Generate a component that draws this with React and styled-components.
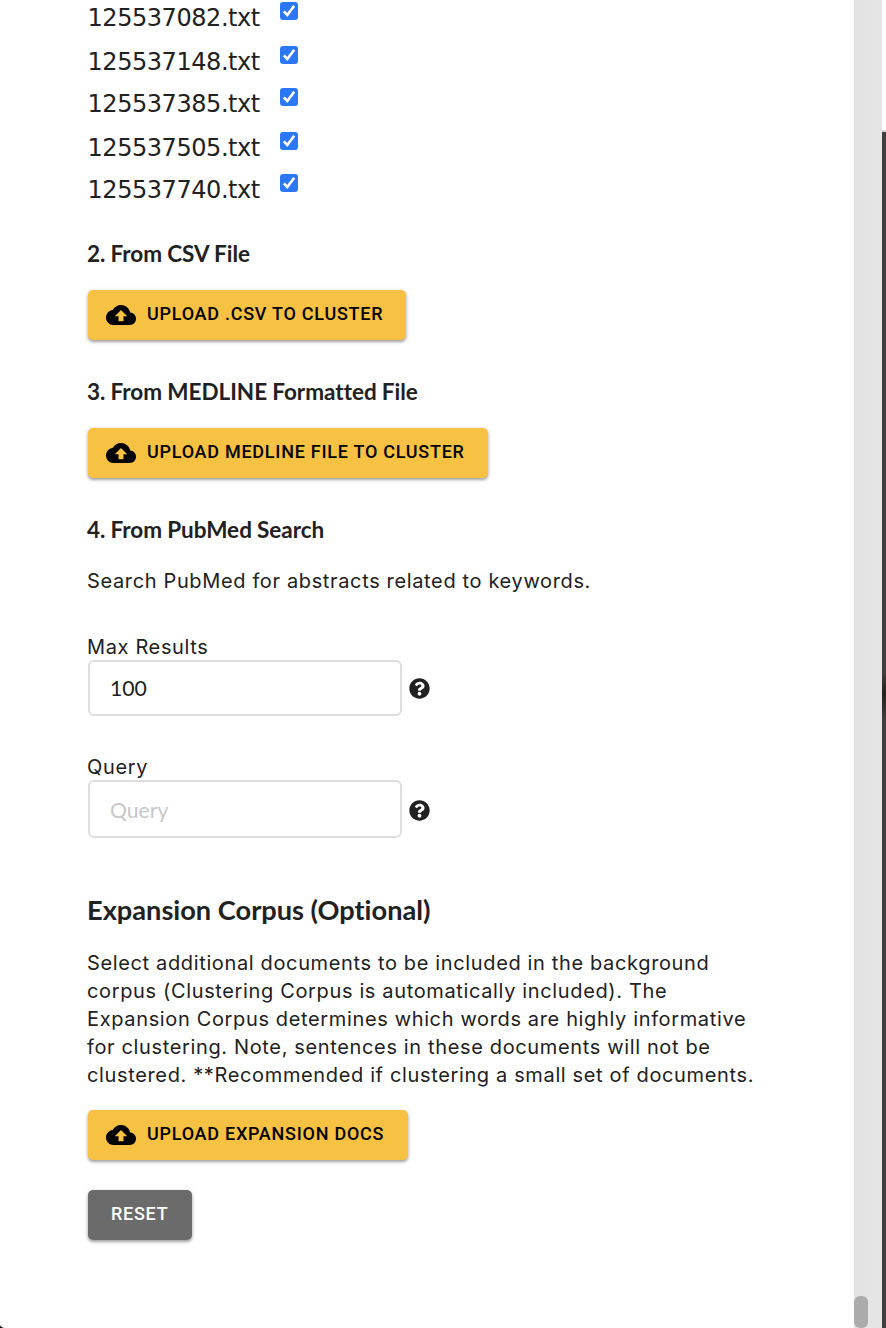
import React, { useState } from "react";
import styled, { createGlobalStyle } from "styled-components";
import { FaQuestionCircle } from "react-icons/fa";

const GlobalStyle = createGlobalStyle`
  *, *::before, *::after { box-sizing: border-box; }
  body { margin: 0; background: #fff; color: #212121; overflow: hidden; }
`;

const Page = styled.div`
  display: flex;
  height: 1328px;
  overflow: hidden;
`;

const Content = styled.main`
  flex: 1;
  padding-left: 87px;
  font-family: Inter, "Liberation Sans", sans-serif;
`;

const FileList = styled.ul`
  list-style: none;
  margin: 0;
  padding: 0;
`;

const FileRow = styled.li`
  display: flex;
  align-items: flex-start;
  height: ${(p) => p.$height}px;
`;

const FileName = styled.label`
  width: 193px;
  padding: 4px 0 0 0.5px;
  font: 24px/28px "DejaVu Sans", sans-serif;
  letter-spacing: -0.45px;
`;

const CheckBox = styled.button`
  display: flex;
  width: 18px;
  height: 18px;
  margin: 2px 0 0;
  padding: 0;
  border: 0;
  border-radius: 3px;
  background: ${(p) => (p.$checked ? "#2b77f8" : "#ddd")};
`;

const SectionTitle = styled.h4`
  margin: 0;
  padding-top: ${(p) => p.$top}px;
  font: 700 22.5px/30px Lato, sans-serif;
  font-variant-ligatures: none;
  word-spacing: -0.4px;
`;

const CorpusTitle = styled.h3`
  margin: 0;
  padding-top: 54px;
  font: 700 27.2px/36px Lato, sans-serif;
  font-variant-ligatures: none;
`;

const Description = styled.p`
  margin: 0;
  padding-top: ${(p) => p.$top}px;
  font-size: 20px;
  line-height: 28px;
  letter-spacing: 0.64px;
  white-space: pre-line;
`;

const Button = styled.button`
  display: flex;
  align-items: center;
  width: ${(p) => p.$width}px;
  height: 50px;
  margin: ${(p) => p.$top}px 0 0 1px;
  padding: 0 0 0 ${(p) => (p.$muted ? 23 : 18)}px;
  border: 0;
  border-radius: 5px;
  background: ${(p) => (p.$muted ? "#6b6b6b" : "#f7c143")};
  color: ${(p) => (p.$muted ? "#fff" : "#000")};
  box-shadow: 0 2px 3px rgba(0, 0, 0, 0.3), 0 1px 5px rgba(0, 0, 0, 0.14);
  font: 500 18px/24px Roboto, sans-serif;
  letter-spacing: 0.74px;
  white-space: nowrap;
`;

const ButtonLabel = styled.span`
  padding-bottom: 2px;
`;

const UploadIcon = styled.svg`
  width: 30px;
  height: 30px;
  margin-right: 11px;
  fill: currentColor;
`;

const Field = styled.div`
  padding-top: ${(p) => p.$top}px;
`;

const FieldLabel = styled.label`
  display: block;
  height: 27px;
  font-size: 20px;
  line-height: 28px;
  letter-spacing: 0.64px;
`;

const FieldRow = styled.div`
  display: flex;
  align-items: center;
  padding-left: 1px;
`;

const Input = styled.input`
  width: 314px;
  height: ${(p) => p.$height}px;
  padding: ${(p) => p.$offset || 0}px 20px ${(p) => p.$bottom || 0}px;
  border: 2px solid #dededf;
  border-radius: 6px;
  background: #fff;
  color: #212121;
  font: 21.2px Lato, sans-serif;
  outline: none;
  &::placeholder { color: #c7c7c7; opacity: 1; }
`;

const HelpIcon = styled(FaQuestionCircle)`
  width: 21px;
  height: 21px;
  margin: ${(p) => p.$shift || 0}px 0 0 6.6px;
`;

const ScrollTrack = styled.div`
  display: flex;
  align-items: flex-end;
  width: 28px;
  background: linear-gradient(90deg, #e3e3e3 0 14px, #e5e5e5 14px);
`;

const ScrollThumb = styled.div`
  width: 14px;
  height: 32px;
  border-radius: 6px;
  background: #ababab;
`;

const WindowEdge = styled.div`
  width: 4px;
  padding-top: 130px;
`;

const EdgeShade = styled.div`
  height: 1198px;
  border-top: 2px solid #d6d6d6;
  background: linear-gradient(#40403e 0 540px, #25221a 562px, #40403e 590px);
`;

const WindowCorner = styled.svg`
  position: absolute;
  left: 0;
  top: 1325px;
  width: 5px;
  height: 3px;
`;

const files = [
  { name: "125537082.txt", height: 44 },
  { name: "125537148.txt", height: 42 },
  { name: "125537385.txt", height: 44 },
  { name: "125537505.txt", height: 42 },
  { name: "125537740.txt", height: 44 },
];

function FileItem({ file }) {
  const [checked, setChecked] = useState(true);
  return (
    <FileRow $height={file.height}>
      <FileName>{file.name}</FileName>
      <CheckBox
        role="checkbox"
        aria-checked={checked}
        aria-label={file.name}
        $checked={checked}
        onClick={() => setChecked(!checked)}
      >
        {checked && (
          <svg width="18" height="18" viewBox="0 0 18 18" fill="none">
            <path d="M3.8 9.4L7.3 13L14.2 3.7" stroke="#fff" strokeWidth="2.6" />
          </svg>
        )}
      </CheckBox>
    </FileRow>
  );
}

function UploadButton({ width, top, children }) {
  return (
    <Button $width={width} $top={top}>
      <UploadIcon viewBox="0 0 24 24">
        <path d="M19.35 10.04C18.67 6.59 15.64 4 12 4 9.11 4 6.6 5.64 5.35 8.04 2.34 8.36 0 10.91 0 14c0 3.31 2.69 6 6 6h13c2.76 0 5-2.24 5-5 0-2.64-2.05-4.78-4.65-4.96zM14 13v4h-4v-4H7l5-5 5 5h-3z" />
      </UploadIcon>
      <ButtonLabel>{children}</ButtonLabel>
    </Button>
  );
}

export default function App() {
  const [max, setMax] = useState("100");
  const [query, setQuery] = useState("");
  return (
    <Page>
      <GlobalStyle />
      <Content>
        <FileList>
          {files.map((file) => (
            <FileItem key={file.name} file={file} />
          ))}
        </FileList>
        <SectionTitle $top={23}>2. From CSV File</SectionTitle>
        <UploadButton width={318} top={21}>UPLOAD .CSV TO CLUSTER</UploadButton>
        <SectionTitle $top={37}>3. From MEDLINE Formatted File</SectionTitle>
        <UploadButton width={400} top={21}>UPLOAD MEDLINE FILE TO CLUSTER</UploadButton>
        <SectionTitle $top={37}>4. From PubMed Search</SectionTitle>
        <Description $top={22}>Search PubMed for abstracts related to keywords.</Description>
        <Field $top={38}>
          <FieldLabel htmlFor="max-results">Max Results</FieldLabel>
          <FieldRow>
            <Input id="max-results" $height={56} $bottom={1} value={max} onChange={(e) => setMax(e.target.value)} />
            <HelpIcon />
          </FieldRow>
        </Field>
        <Field $top={37}>
          <FieldLabel htmlFor="query">Query</FieldLabel>
          <FieldRow>
            <Input id="query" $height={58} $offset={2} placeholder="Query" value={query} onChange={(e) => setQuery(e.target.value)} />
            <HelpIcon $shift={2} />
          </FieldRow>
        </Field>
        <CorpusTitle>Expansion Corpus (Optional)</CorpusTitle>
        <Description $top={21}>
          {`Select additional documents to be included in the background
corpus (Clustering Corpus is automatically included). The
Expansion Corpus determines which words are highly informative
for clustering. Note, sentences in these documents will not be
clustered. **Recommended if clustering a small set of documents.`}
        </Description>
        <UploadButton width={320} top={21}>UPLOAD EXPANSION DOCS</UploadButton>
        <Button $muted $width={104} $top={30}>
          <ButtonLabel>RESET</ButtonLabel>
        </Button>
      </Content>
      <ScrollTrack>
        <ScrollThumb />
      </ScrollTrack>
      <WindowEdge>
        <EdgeShade />
      </WindowEdge>
      <WindowCorner viewBox="0 0 5 3">
        <path d="M0 0Q1 2.5 5 3H0Z" fill="#111" />
      </WindowCorner>
    </Page>
  );
}
